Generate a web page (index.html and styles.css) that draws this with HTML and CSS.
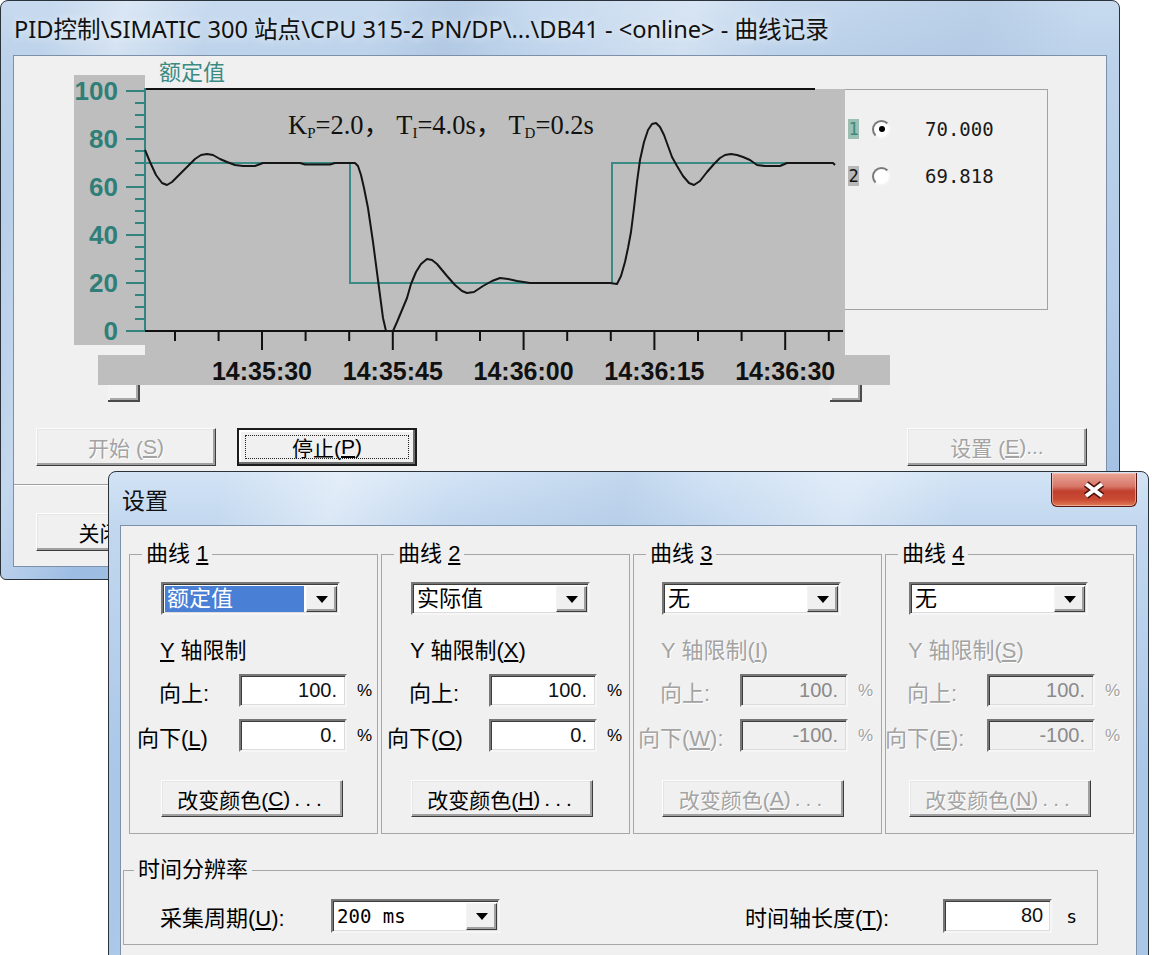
FILE: index.html
```html
<!DOCTYPE html>
<html lang="zh-CN">
<head>
<meta charset="utf-8">
<title>曲线记录</title>
<link rel="stylesheet" href="styles.css">
</head>
<body>
<div class="win main">
  <div class="titlebar"><span class="title">PID控制\SIMATIC 300 站点\CPU 315-2 PN/DP\...\DB41 - &lt;online&gt; - 曲线记录</span></div>
  <div class="client">
    <div class="chart-area">
      <div class="legend-box">
        <div class="lg-row"><span class="lg-idx one">1</span><span class="radio on"></span><span class="lg-val">70.000</span></div>
        <div class="lg-row"><span class="lg-idx two">2</span><span class="radio"></span><span class="lg-val">69.818</span></div>
      </div>
      <svg class="chart" viewBox="14 56 880 350" width="880" height="350">
        <g class="sarrow">
          <rect x="108" y="372" width="32" height="30" class="sa-face"/>
          <path d="M108 401H140M139 372V402" class="sa-dark"/>
          <path d="M110 399H138M137 372V400" class="sa-mid"/>
          <rect x="830" y="372" width="32" height="30" class="sa-face"/>
          <path d="M830 401H862M861 372V402" class="sa-dark"/>
          <path d="M832 399H860M859 372V400" class="sa-mid"/>
        </g>
        <rect x="74" y="75" width="71" height="270" class="panel"/>
        <rect x="145" y="89" width="700" height="266" class="panel"/>
        <rect x="98" y="355" width="792" height="30" class="panel"/>
        <text x="159" y="80" class="ytitle">额定值</text>
        <path d="M145 89H815" class="frame-line"/>
        <path d="M145 88V332" class="teal-line"/>
        <path d="M126 91H145M126 139H145M126 187H145M126 235H145M126 283H145M126 331H145" class="teal-line"/>
        <path d="M135 103H145M135 115H145M135 127H145M135 151H145M135 163H145M135 175H145M135 199H145M135 211H145M135 223H145M135 247H145M135 259H145M135 271H145M135 295H145M135 307H145M135 319H145" class="teal-line"/>
        <g class="ylab">
          <text x="118" y="100">100</text>
          <text x="118" y="148">80</text>
          <text x="118" y="196">60</text>
          <text x="118" y="244">40</text>
          <text x="118" y="292">20</text>
          <text x="118" y="340">0</text>
        </g>
        <path d="M145 331H843" class="frame-line"/>
        <path d="M262 331V350M392.8 331V350M523.6 331V350M654.4 331V350M785.2 331V350" class="frame-line"/>
        <path d="M175 331V341M218.6 331V341M305.6 331V341M349.2 331V341M436.4 331V341M480 331V341M567.2 331V341M610.8 331V341M698 331V341M741.6 331V341M828.8 331V341" class="frame-line"/>
        <g class="xlab">
          <text x="262" y="380">14:35:30</text>
          <text x="392.8" y="380">14:35:45</text>
          <text x="523.6" y="380">14:36:00</text>
          <text x="654.4" y="380">14:36:15</text>
          <text x="785.2" y="380">14:36:30</text>
        </g>
        <path d="M145 163H350V283H612V163H833" class="setpoint"/>
        <polyline class="actual" points="145,150 150,162 156,175 162,183 167,185 172,182 180,174 188,166 195,159 201,155 207,154 213,155 220,159 227,162 235,165 243,166 255,166 263,163 300,163 305,164.5 330,164.5 335,163 355,163 358,166 361,175 364,188 368,208 373,242 378,280 383,318 386,331 393,331 397,322 402,310 407,298 411,284 416,272 421,264 427,259 432,260 437,264 447,276 455,285 462,291 467,293 474,292 483,286 492,281 500,278 508,279 517,281 530,283 610,283 617,284 621,276 625,262 628,248 631,232 634,208 637,182 640,160 644,142 648,130 652,124 656,123 660,127 664,135 668,146 672,157 677,166 683,176 689,183 694,185 700,181 707,172 714,164 720,158 725,155 731,154 737,155 743,157 750,160 757,165 765,166 780,166 787,163 833,163 835,165"/>
        <text x="288" y="134" class="anno">K<tspan class="sub" dy="4">P</tspan><tspan dy="-4">=2.0， T</tspan><tspan class="sub" dy="4">I</tspan><tspan dy="-4">=4.0s， T</tspan><tspan class="sub" dy="4">D</tspan><tspan dy="-4">=0.2s</tspan></text>
      </svg>
    </div>
    <div class="btn-row">
      <button class="btn dis">开始 (<u>S</u>)</button>
      <button class="btn def"><span class="focus">停止(<u>P</u>)</span></button>
      <button class="btn dis push-right">设置 (<u>E</u>)...</button>
    </div>
    <div class="sep"></div>
    <div class="close-row">
      <button class="btn closebtn">关闭(<u>C</u>)</button>
    </div>
  </div>
</div>

<div class="win dialog">
  <div class="dlg-title">
    <span class="dlg-text">设置</span>
    <span class="close-x"><svg width="28" height="20" viewBox="-14 -10 28 20"><path d="M-8 -6L8 6M8 -6L-8 6" class="x-out"/><path d="M-8 -6L8 6M8 -6L-8 6" class="x-in"/></svg></span>
  </div>
  <div class="dlg-client">
    <div class="groups">
      <fieldset class="grp g1">
        <legend>曲线 <u>1</u></legend>
        <div class="gc">
          <div class="combo"><span class="cv sel">额定值</span><span class="dd"><i></i></span></div>
          <div class="ylim"><u>Y</u> 轴限制</div>
          <div class="frow up"><span class="lbl">向上:</span><span class="edit">100.</span><span class="pct">%</span></div>
          <div class="frow down"><span class="lbl">向下(<u>L</u>)</span><span class="edit">0.</span><span class="pct">%</span></div>
          <button class="btn cbtn">改变颜色(<u>C</u>)<span class="dots">...</span></button>
        </div>
      </fieldset>
      <fieldset class="grp g2">
        <legend>曲线 <u>2</u></legend>
        <div class="gc">
          <div class="combo"><span class="cv">实际值</span><span class="dd"><i></i></span></div>
          <div class="ylim">Y 轴限制(<u>X</u>)</div>
          <div class="frow up"><span class="lbl">向上:</span><span class="edit">100.</span><span class="pct">%</span></div>
          <div class="frow down"><span class="lbl">向下(<u>O</u>)</span><span class="edit">0.</span><span class="pct">%</span></div>
          <button class="btn cbtn">改变颜色(<u>H</u>)<span class="dots">...</span></button>
        </div>
      </fieldset>
      <fieldset class="grp g3 off">
        <legend>曲线 <u>3</u></legend>
        <div class="gc">
          <div class="combo"><span class="cv">无</span><span class="dd"><i></i></span></div>
          <div class="ylim">Y 轴限制(<u>I</u>)</div>
          <div class="frow up"><span class="lbl">向上:</span><span class="edit">100.</span><span class="pct">%</span></div>
          <div class="frow down"><span class="lbl">向下(<u>W</u>):</span><span class="edit">-100.</span><span class="pct">%</span></div>
          <button class="btn cbtn">改变颜色(<u>A</u>)<span class="dots">...</span></button>
        </div>
      </fieldset>
      <fieldset class="grp g4 off">
        <legend>曲线 <u>4</u></legend>
        <div class="gc">
          <div class="combo"><span class="cv">无</span><span class="dd"><i></i></span></div>
          <div class="ylim">Y 轴限制(<u>S</u>)</div>
          <div class="frow up"><span class="lbl">向上:</span><span class="edit">100.</span><span class="pct">%</span></div>
          <div class="frow down"><span class="lbl">向下(<u>E</u>):</span><span class="edit">-100.</span><span class="pct">%</span></div>
          <button class="btn cbtn">改变颜色(<u>N</u>)<span class="dots">...</span></button>
        </div>
      </fieldset>
    </div>
    <fieldset class="grp tgrp">
      <legend>时间分辨率</legend>
      <div class="trow">
        <span class="tl1">采集周期(<u>U</u>):</span>
        <div class="combo tcombo"><span class="cv mono">200 ms</span><span class="dd"><i></i></span></div>
        <span class="tl2">时间轴长度(<u>T</u>):</span>
        <span class="edit tedit">80</span>
        <span class="unit">s</span>
      </div>
    </fieldset>
  </div>
</div>
</body>
</html>
```

FILE: styles.css
```css
* { box-sizing: border-box; }
html, body { margin: 0; padding: 0; }
body {
  width: 1152px;
  height: 955px;
  overflow: hidden;
  background: #ffffff;
  position: relative;
  font-family: "Liberation Sans", "Noto Sans CJK SC", sans-serif;
  color: #000;
}
u { text-decoration: underline; text-underline-offset: 2px; }

/* ---------- windows ---------- */
.win {
  position: absolute;
  display: flex;
  flex-direction: column;
  border: 1px solid #2a323c;
}
.main {
  left: 0;
  top: 0;
  width: 1120px;
  height: 580px;
  border-radius: 8px 8px 6px 6px;
  padding: 0 12px 12px;
  background:
    linear-gradient(104deg, rgba(255,255,255,0) 4%, rgba(255,255,255,.35) 10%, rgba(255,255,255,0) 17%, rgba(255,255,255,0) 30%, rgba(140,170,205,.25) 36%, rgba(255,255,255,0) 42%, rgba(255,255,255,.3) 55%, rgba(255,255,255,0) 62%, rgba(140,170,205,.2) 78%, rgba(255,255,255,0) 86%),
    linear-gradient(#c7daef 0, #bcd2ea 60px, #b2cbe7 300px, #9dbde3 580px);
}
.titlebar {
  height: 54px;
  display: flex;
  align-items: center;
  padding-left: 1px;
  flex-shrink: 0;
}
.title {
  font-family: "Noto Sans", "Noto Sans CJK SC", sans-serif;
  font-size: 23.6px;
  white-space: nowrap;
  color: #111;
  text-shadow: 0 0 8px rgba(255,255,255,.8);
}
.client {
  flex: 1;
  background: #f0f0f0;
  border: 1px solid #7d90a9;
  display: flex;
  flex-direction: column;
}

/* ---------- chart ---------- */
.chart-area {
  display: grid;
  height: 350px;
  flex-shrink: 0;
}
.chart-area > * { grid-area: 1 / 1; }
.legend-box {
  margin: 33px 0 0 826px;
  width: 208px;
  height: 221px;
  border: 1px solid #a2a2a2;
  background: #f0f0f0;
  padding-top: 26px;
  display: flex;
  flex-direction: column;
  gap: 21px;
}
.lg-row {
  display: flex;
  align-items: center;
  height: 26px;
}
.lg-idx {
  margin-left: 7px;
  width: 11px;
  height: 20px;
  font: 17px "DejaVu Sans Mono", monospace;
  line-height: 20px;
  text-align: center;
}
.lg-idx.one { background: #9cbfb4; color: #3d8a7c; }
.lg-idx.two { background: #b8b8b8; color: #111; }
.radio {
  margin-left: 13px;
  width: 19px;
  height: 19px;
  border-radius: 50%;
  border: 2px solid;
  border-color: #7a7a7a #f4f4f4 #f4f4f4 #7a7a7a;
  background: #fff;
  display: flex;
  align-items: center;
  justify-content: center;
}
.radio.on::after {
  content: "";
  width: 6px;
  height: 6px;
  border-radius: 50%;
  background: #000;
}
.lg-val {
  margin-left: 34px;
  font: 19px "DejaVu Sans Mono", monospace;
  color: #1a1a1a;
}
.chart { display: block; overflow: visible; }
.panel { fill: #bebebe; }
.sa-face { fill: #f3f3f3; }
.sa-dark { stroke: #4a4a4a; stroke-width: 2; fill: none; }
.sa-mid { stroke: #a8a8a8; stroke-width: 2; fill: none; }
.ytitle { font: 22px "Noto Sans CJK SC", sans-serif; fill: #3a8b84; }
.frame-line { stroke: #111; stroke-width: 2; fill: none; }
.teal-line { stroke: #33847e; stroke-width: 2; fill: none; }
.ylab text { font: bold 26px "Liberation Sans", sans-serif; fill: #2f7f78; text-anchor: end; }
.xlab text { font: bold 25px "Liberation Sans", sans-serif; fill: #111; text-anchor: middle; }
.setpoint { stroke: #3a8a85; stroke-width: 2; fill: none; }
.actual { stroke: #151515; stroke-width: 2; fill: none; stroke-linejoin: round; }
.anno { font: 26.5px "Liberation Serif", "Noto Sans CJK SC", serif; fill: #111; white-space: pre; }
.anno .sub { font-size: 15px; }

/* ---------- classic controls ---------- */
.btn {
  font: 21px "Liberation Sans", "Noto Sans CJK SC", sans-serif;
  background: #f0f0f0;
  border: 1px solid;
  border-color: #fdfdfd #3c3c3c #3c3c3c #fdfdfd;
  box-shadow: inset -2px -2px #a0a0a0, inset 1px 1px #e6e6e6;
  color: #000;
  padding: 0;
  display: flex;
  align-items: center;
  justify-content: center;
  width: 180px;
  height: 38px;
  white-space: pre;
}
.btn.dis { color: #a3a3a3; text-shadow: 1px 1px #fff; }
.btn.def {
  border: 2px solid #1c1c1c;
  box-shadow: inset -2px -2px #6e6e6e, inset 2px 2px #ffffff;
}
.focus {
  width: calc(100% - 12px);
  height: calc(100% - 10px);
  border: 1px dotted #222;
  display: flex;
  align-items: center;
  justify-content: center;
}
.btn-row {
  display: flex;
  gap: 21px;
  margin-top: 22px;
  padding: 0 19px 0 22px;
}
.push-right { margin-left: auto; }
.sep {
  margin-top: 18px;
  height: 2px;
  border-top: 1px solid #a0a0a0;
  border-bottom: 1px solid #ffffff;
}
.close-row {
  margin-top: 27px;
  padding-left: 22px;
}
.closebtn { padding-right: 24px; }

.edit {
  display: block;
  width: 108px;
  height: 33px;
  background: #fff;
  border: 2px solid;
  border-color: #777 #f6f6f6 #f6f6f6 #777;
  box-shadow: inset 1px 1px #3c3c3c, inset -1px -1px #dcdcdc;
  text-align: right;
  padding-right: 8px;
  font: 20px "Liberation Sans", sans-serif;
  line-height: 29px;
  color: #111;
}
.combo {
  display: flex;
  width: 179px;
  height: 33px;
  background: #fff;
  border: 2px solid;
  border-color: #777 #f6f6f6 #f6f6f6 #777;
  box-shadow: inset 1px 1px #3c3c3c, inset -1px -1px #dcdcdc;
  padding: 2px 1px 1px 2px;
}
.cv {
  flex: 1;
  font: 22px "Liberation Sans", "Noto Sans CJK SC", sans-serif;
  line-height: 26px;
  padding-left: 2px;
  white-space: nowrap;
}
.cv.sel { background: #4a7fd6; color: #fff; margin-right: 2px; }
.cv.mono { font: 19px "DejaVu Sans Mono", monospace; line-height: 26px; }
.dd {
  width: 31px;
  background: #f0f0f0;
  border: 1px solid;
  border-color: #f4f4f4 #3c3c3c #3c3c3c #f4f4f4;
  box-shadow: inset -2px -2px #a0a0a0;
  display: flex;
  align-items: center;
  justify-content: center;
}
.dd i {
  width: 0;
  height: 0;
  border-left: 6px solid transparent;
  border-right: 6px solid transparent;
  border-top: 7px solid #000;
}

/* ---------- dialog ---------- */
.dialog {
  left: 108px;
  top: 471px;
  width: 1041px;
  height: 492px;
  border-radius: 8px 8px 0 0;
  padding: 0 11px;
  background:
    linear-gradient(104deg, rgba(255,255,255,0) 10%, rgba(255,255,255,.4) 20%, rgba(255,255,255,0) 30%, rgba(150,180,215,.25) 45%, rgba(255,255,255,0) 52%, rgba(255,255,255,.35) 64%, rgba(255,255,255,0) 74%),
    linear-gradient(#d2e3f5 0, #c3d8ef 50px, #aac7e8 300px);
}
.dlg-title {
  height: 53px;
  display: flex;
  justify-content: space-between;
  align-items: flex-start;
  flex-shrink: 0;
}
.dlg-text {
  align-self: center;
  padding-left: 2px;
  font: 23px "Noto Sans CJK SC", sans-serif;
  color: #111;
}
.close-x {
  width: 86px;
  height: 34px;
  margin-top: 1px;
  border: 1px solid #5a1810;
  border-top: none;
  border-radius: 0 0 6px 6px;
  background: linear-gradient(#e9a596 0, #d8786a 40%, #c1402e 55%, #c94a33 80%, #e07a55 100%);
  box-shadow: inset 0 0 0 1px rgba(255,220,210,.5);
  display: flex;
  align-items: center;
  justify-content: center;
}
.x-out { stroke: #4a1208; stroke-width: 7; fill: none; }
.x-in { stroke: #fff; stroke-width: 4; fill: none; }
.dlg-client {
  flex: 1;
  background: #f0f0f0;
  border: 1px solid #7d90a9;
  border-bottom: none;
}
.groups {
  display: grid;
  grid-template-columns: repeat(4, 249px);
  column-gap: 3px;
  margin: 15px 0 0 8px;
}
.grp {
  margin: 0;
  padding: 0;
  min-width: 0;
  border: 1px solid #a6a6a6;
  height: 293px;
}
.grp legend {
  margin-left: 12px;
  padding: 0 4px;
  font: 22px "Liberation Sans", "Noto Sans CJK SC", sans-serif;
  line-height: 26px;
}
.gc {
  display: flex;
  flex-direction: column;
  align-items: flex-start;
  font-size: 22px;
}
.g2 .gc { margin-left: -2px; }
.g3 .gc { margin-left: -3px; }
.g4 .gc { margin-left: -8px; }
.gc .combo { margin: 15px 0 0 31px; }
.ylim { margin: 23px 0 0 30px; line-height: 26px; }
.frow { display: flex; align-items: center; height: 33px; }
.frow.up { margin-top: 10px; }
.frow.down { margin-top: 12px; }
.lbl { width: 109px; white-space: nowrap; }
.up .lbl { padding-left: 29px; }
.down .lbl { padding-left: 7px; }
.pct { margin-left: 10px; font: 17px "Liberation Sans", sans-serif; }
.cbtn { margin: 28px 0 0 31px; width: 182px; height: 37px; }
.dots { letter-spacing: 5px; margin-left: 4px; }
.off legend { color: #000; }
.off .ylim, .off .lbl, .off .pct, .off .cbtn { color: #a3a3a3; text-shadow: 1px 1px #fff; }
.off .edit { background: #f0f0f0; color: #8a8a8a; }

.tgrp {
  margin: 23px 0 0 2px;
  width: 975px;
  height: 88px;
}
.tgrp legend { margin-left: 10px; }
.trow {
  display: flex;
  align-items: center;
  margin-top: 16px;
  font-size: 22px;
}
.tl1 { margin-left: 36px; width: 171px; white-space: nowrap; }
.tcombo { width: 169px; height: 34px; }
.tl2 { margin-left: auto; margin-right: 54px; white-space: nowrap; }
.tedit { width: 109px; height: 34px; padding-right: 7px; }
.unit { margin: 0 20px 0 14px; font: 18px "DejaVu Sans Mono", monospace; }
```
